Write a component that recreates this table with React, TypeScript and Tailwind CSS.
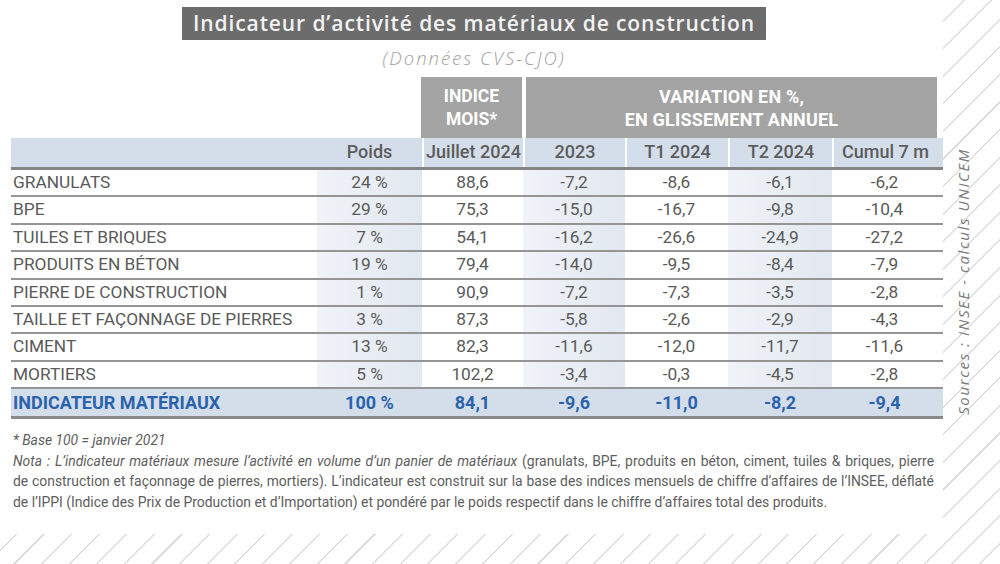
import React from "react";

const rows: [string, string, string, string, string, string, string][] = [
  ["GRANULATS", "24 %", "88,6", "-7,2", "-8,6", "-6,1", "-6,2"],
  ["BPE", "29 %", "75,3", "-15,0", "-16,7", "-9,8", "-10,4"],
  ["TUILES ET BRIQUES", "7 %", "54,1", "-16,2", "-26,6", "-24,9", "-27,2"],
  ["PRODUITS EN BÉTON", "19 %", "79,4", "-14,0", "-9,5", "-8,4", "-7,9"],
  ["PIERRE DE CONSTRUCTION", "1 %", "90,9", "-7,2", "-7,3", "-3,5", "-2,8"],
  ["TAILLE ET FAÇONNAGE DE PIERRES", "3 %", "87,3", "-5,8", "-2,6", "-2,9", "-4,3"],
  ["CIMENT", "13 %", "82,3", "-11,6", "-12,0", "-11,7", "-11,6"],
  ["MORTIERS", "5 %", "102,2", "-3,4", "-0,3", "-4,5", "-2,8"],
];

const grid = "grid grid-cols-[306px_105px_101px_102px_103px_104px_105px]";
const shade = "bg-linear-to-r from-[#f0f3f8] to-[#e2e8f0]";

export default function App() {
  return (
    <div className="w-[1000px] h-[564px] flex items-start bg-[repeating-linear-gradient(135deg,#ffffff_0px,#ffffff_18px,#dedede_18px,#dedede_19.5px)] overflow-hidden font-['Roboto',sans-serif] text-[#5a5a5a]">
      <div className="w-[943px] h-[534px] bg-white pl-[11px] flex flex-col">
        <div className="w-[926px] flex flex-col items-center">
          <div className="mt-[7px] h-[33px] w-[584px] bg-[#6c6c6c] flex items-center justify-center font-['Open_Sans',sans-serif] font-semibold text-[21px] text-[#f2f2f2] tracking-[0.9px]">
            Indicateur d’activité des matériaux de construction
          </div>
          <div className="mt-[6px] h-[24px] leading-[24px] font-['Open_Sans',sans-serif] font-light italic text-[18.5px] tracking-[2px] text-[#a0a0a0]">
            (Données CVS-CJO)
          </div>
        </div>

        {/* header row 1 */}
        <div className={`${grid} mt-[7px] h-[61px]`}>
          <div className="col-span-2" />
          <div className="bg-[#a4a4a4] mr-px -ml-px flex flex-col items-center justify-center text-white font-bold text-[17.5px] leading-[23px]">
            <span>INDICE</span>
            <span>MOIS*</span>
          </div>
          <div className="col-span-4 ml-[3px] bg-[#a4a4a4] flex flex-col items-center justify-center text-white font-bold text-[18px] tracking-[0.2px] leading-[23px]">
            <span>VARIATION EN %,</span>
            <span>EN GLISSEMENT ANNUEL</span>
          </div>
        </div>

        {/* header row 2 */}
        <div className={`${grid} h-[32px] bg-[#d4deea] border-b-[3px] border-[#858585] font-medium text-[18px] leading-[28px] text-[#5c5c5c]`}>
          <div />
          <div className="text-center">Poids</div>
          <div className="text-center border-l-2 border-white">Juillet 2024</div>
          <div className="text-center border-l-2 border-white">2023</div>
          <div className="text-center border-l-2 border-white">T1 2024</div>
          <div className="text-center border-l-2 border-white">T2 2024</div>
          <div className="text-center border-l-2 border-white">Cumul 7 m</div>
        </div>

        {rows.map((r) => (
          <div key={r[0]} className={`${grid} h-[27.4px] border-b-2 border-[#959595] text-[17.3px] leading-[25px]`}>
            <div className="pl-[2px] whitespace-nowrap">{r[0]}</div>
            <div className={`text-center ${shade}`}>{r[1]}</div>
            <div className="text-center">{r[2]}</div>
            <div className={`text-center ${shade}`}>{r[3]}</div>
            <div className="text-center">{r[4]}</div>
            <div className={`text-center ${shade}`}>{r[5]}</div>
            <div className="text-center">{r[6]}</div>
          </div>
        ))}

        <div className={`${grid} h-[30px] bg-[#d4deea] border-b-[3px] border-[#8a8a8a] font-bold text-[18px] leading-[27px] text-[#2a63ad]`}>
          <div className="pl-[2px] whitespace-nowrap">INDICATEUR MATÉRIAUX</div>
          <div className="text-center">100 %</div>
          <div className="text-center">84,1</div>
          <div className="text-center">-9,6</div>
          <div className="text-center">-11,0</div>
          <div className="text-center">-8,2</div>
          <div className="text-center">-9,4</div>
        </div>

        <div className="mt-[11px] w-[923px] pl-[2px] text-[13.9px] leading-[20.6px] text-[#5e5e5e]">
          <div className="italic">* Base 100 = janvier 2021</div>
          <div className="text-justify [text-align-last:justify] whitespace-nowrap">
            <span className="italic">Nota : L’indicateur matériaux mesure l’activité en volume d’un panier de matériaux</span> (granulats, BPE, produits en béton, ciment, tuiles &amp; briques, pierre
          </div>
          <div className="text-justify [text-align-last:justify] whitespace-nowrap">
            de construction et façonnage de pierres, mortiers). L’indicateur est construit sur la base des indices mensuels de chiffre d’affaires de l’INSEE, déflaté
          </div>
          <div className="whitespace-nowrap">
            de l’IPPI (Indice des Prix de Production et d’Importation) et pondéré par le poids respectif dans le chiffre d’affaires total des produits.
          </div>
        </div>
      </div>

      <div className="flex-1 flex items-start pl-[12px] pt-[148px]">
        <span className="[writing-mode:vertical-rl] rotate-180 italic text-[15px] leading-[16px] tracking-[1.6px] text-[#7a7a7a] font-['Open_Sans',sans-serif] whitespace-nowrap">
          Sources : INSEE - calculs UNICEM
        </span>
      </div>
    </div>
  );
}
